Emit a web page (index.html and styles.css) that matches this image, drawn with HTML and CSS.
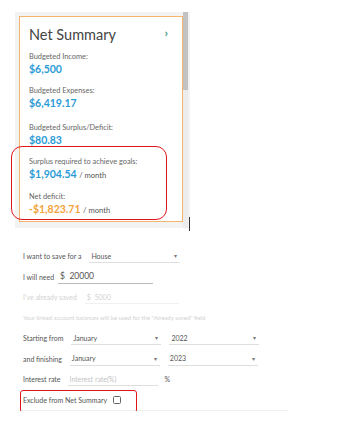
FILE: index.html
```html
<!DOCTYPE html>
<html lang="en">
<head>
  <meta charset="UTF-8" />
  <meta name="viewport" content="width=device-width, initial-scale=1.0" />
  <title>Net Summary</title>
  <link rel="stylesheet" href="styles.css">
</head>
<body>
  <div class="panel">
    <div class="summary">
      <div class="summary-head">
        <h1>Net Summary</h1>
        <span class="chevron">&#8250;</span>
      </div>
      <div class="item">
        <p class="label">Budgeted Income:</p>
        <p class="value">$6,500</p>
      </div>
      <div class="item item-wide">
        <p class="label">Budgeted Expenses:</p>
        <p class="value">$6,419.17</p>
      </div>
      <div class="item">
        <p class="label">Budgeted Surplus/Deficit:</p>
        <p class="value">$80.83</p>
      </div>
      <div class="item">
        <p class="label">Surplus required to achieve goals:</p>
        <p class="value">$1,904.54 <span class="unit">/ month</span></p>
      </div>
      <div class="item">
        <p class="label">Net deficit:</p>
        <p class="value negative">-$1,823.71 <span class="unit">/ month</span></p>
      </div>
      <div class="highlight highlight-summary"></div>
    </div>
    <div class="scrollbar"><div class="thumb"></div></div>
    <div class="cursor"></div>
  </div>

  <div class="goal-form">
    <div class="row">
      <span class="field-label">I want to save for a</span>
      <div class="select select-goal"><span>House</span><span class="arrow">&#9662;</span></div>
    </div>
    <div class="row">
      <span class="field-label">I will need</span>
      <div class="input input-need"><span>$&nbsp;&nbsp;20000</span></div>
    </div>
    <div class="row faded">
      <span class="field-label">I've already saved</span>
      <div class="input input-saved"><span>$&nbsp;&nbsp;5000</span></div>
    </div>
    <div class="row faded">
      <span class="note">Your linked account balances will be used for the "Already saved" field</span>
    </div>
    <div class="row">
      <span class="field-label">Starting from</span>
      <div class="select select-month"><span>January</span><span class="arrow">&#9662;</span></div>
      <div class="select select-year"><span>2022</span><span class="arrow">&#9662;</span></div>
    </div>
    <div class="row">
      <span class="field-label">and finishing</span>
      <div class="select select-month"><span>January</span><span class="arrow">&#9662;</span></div>
      <div class="select select-year"><span>2023</span><span class="arrow">&#9662;</span></div>
    </div>
    <div class="row">
      <span class="field-label">Interest rate</span>
      <div class="input input-rate"><span class="placeholder">Interest rate(%)</span></div>
      <span class="field-label percent">%</span>
    </div>
    <div class="row row-exclude">
      <span class="field-label">Exclude from Net Summary</span>
      <span class="checkbox"></span>
      <div class="highlight highlight-exclude"></div>
    </div>
  </div>
</body>
</html>
```

FILE: styles.css
```css
body {
  font-family: 'Lato', 'Open Sans', sans-serif;
  margin: 0;
  background: #fff;
  color: #555;
}
p {
  margin: 0;
}

/* summary panel */
.panel {
  position: relative;
  width: 164px;
  margin: 12px 0 0 15px;
  padding: 4px 7px 6px 4px;
  background: #f3f3f4;
}
.summary {
  position: relative;
  height: 206px;
  padding: 9px 10px 0 9px;
  background: #fff;
  border: 1.5px solid #f6b56f;
  box-sizing: border-box;
}
.summary-head {
  display: flex;
  justify-content: space-between;
  align-items: center;
  margin-bottom: 8px;
}
.summary-head h1 {
  margin: 0;
  font-size: 14.5px;
  font-weight: 400;
  color: #444;
}
.chevron {
  font-size: 12px;
  font-weight: 700;
  color: #3a9c8c;
  margin-right: 4px;
  margin-top: -4px;
}
.item {
  margin-bottom: 8px;
}
.item-wide {
  margin-bottom: 11px;
}
.label {
  font-size: 7.4px;
  color: #666;
  line-height: 11px;
}
.value {
  font-size: 10.5px;
  font-weight: 700;
  color: #2b9bd6;
  line-height: 15px;
}
.value.negative {
  color: #f3a340;
}
.unit {
  font-size: 7.6px;
  font-weight: 400;
  color: #555;
}
.highlight {
  position: absolute;
  border: 1.6px solid #e0151b;
  box-sizing: border-box;
}
.highlight-summary {
  left: -9px;
  top: 129px;
  width: 156px;
  height: 74px;
  border-radius: 11px;
}
.scrollbar {
  position: absolute;
  right: 2px;
  top: 0;
  width: 5px;
  height: 100%;
  background: #ececec;
}
.thumb {
  height: 78px;
  background: #c2c2c2;
}
.cursor {
  position: absolute;
  right: 0;
  bottom: -3px;
  width: 1px;
  height: 14px;
  background: #333;
}

/* goal form */
.goal-form {
  margin-top: 18px;
  padding-left: 23px;
  font-size: 7px;
}
.row {
  display: flex;
  align-items: center;
  gap: 8px;
  height: 20.5px;
}
.row.faded {
  color: #d2d2d2;
}
.field-label {
  white-space: nowrap;
}
.select,
.input {
  display: flex;
  justify-content: space-between;
  align-items: center;
  height: 14px;
  padding: 0 3px 0 2px;
  border-bottom: 1px solid #dedede;
  box-sizing: border-box;
  color: #555;
}
.faded .input {
  color: #d2d2d2;
  border-bottom-color: #f0f0f0;
}
.arrow {
  font-size: 6px;
  color: #777;
}
.select-goal {
  width: 91px;
}
.input-need {
  width: 95px;
  font-size: 8.5px;
  margin-left: -4px;
  border-bottom-color: #bbb;
}
.input-saved {
  width: 94px;
}
.note {
  font-size: 6px;
}
.select-month {
  width: 90px;
}
.select-year {
  width: 90px;
}
.input-rate {
  width: 90px;
  margin-left: -1px;
}
.placeholder {
  color: #c4c4c4;
}
.percent {
  margin-left: -1px;
}
.row-exclude {
  position: relative;
  width: 265px;
  margin-left: -3px;
  padding-left: 3px;
  border-bottom: 1px solid #f0f0f0;
  gap: 6px;
}
.checkbox {
  width: 8px;
  height: 8px;
  border: 1px solid #666;
  border-radius: 1.5px;
  box-sizing: border-box;
}
.highlight-exclude {
  left: 0;
  top: 0;
  width: 117px;
  height: 23px;
  border-radius: 3px;
}
```
